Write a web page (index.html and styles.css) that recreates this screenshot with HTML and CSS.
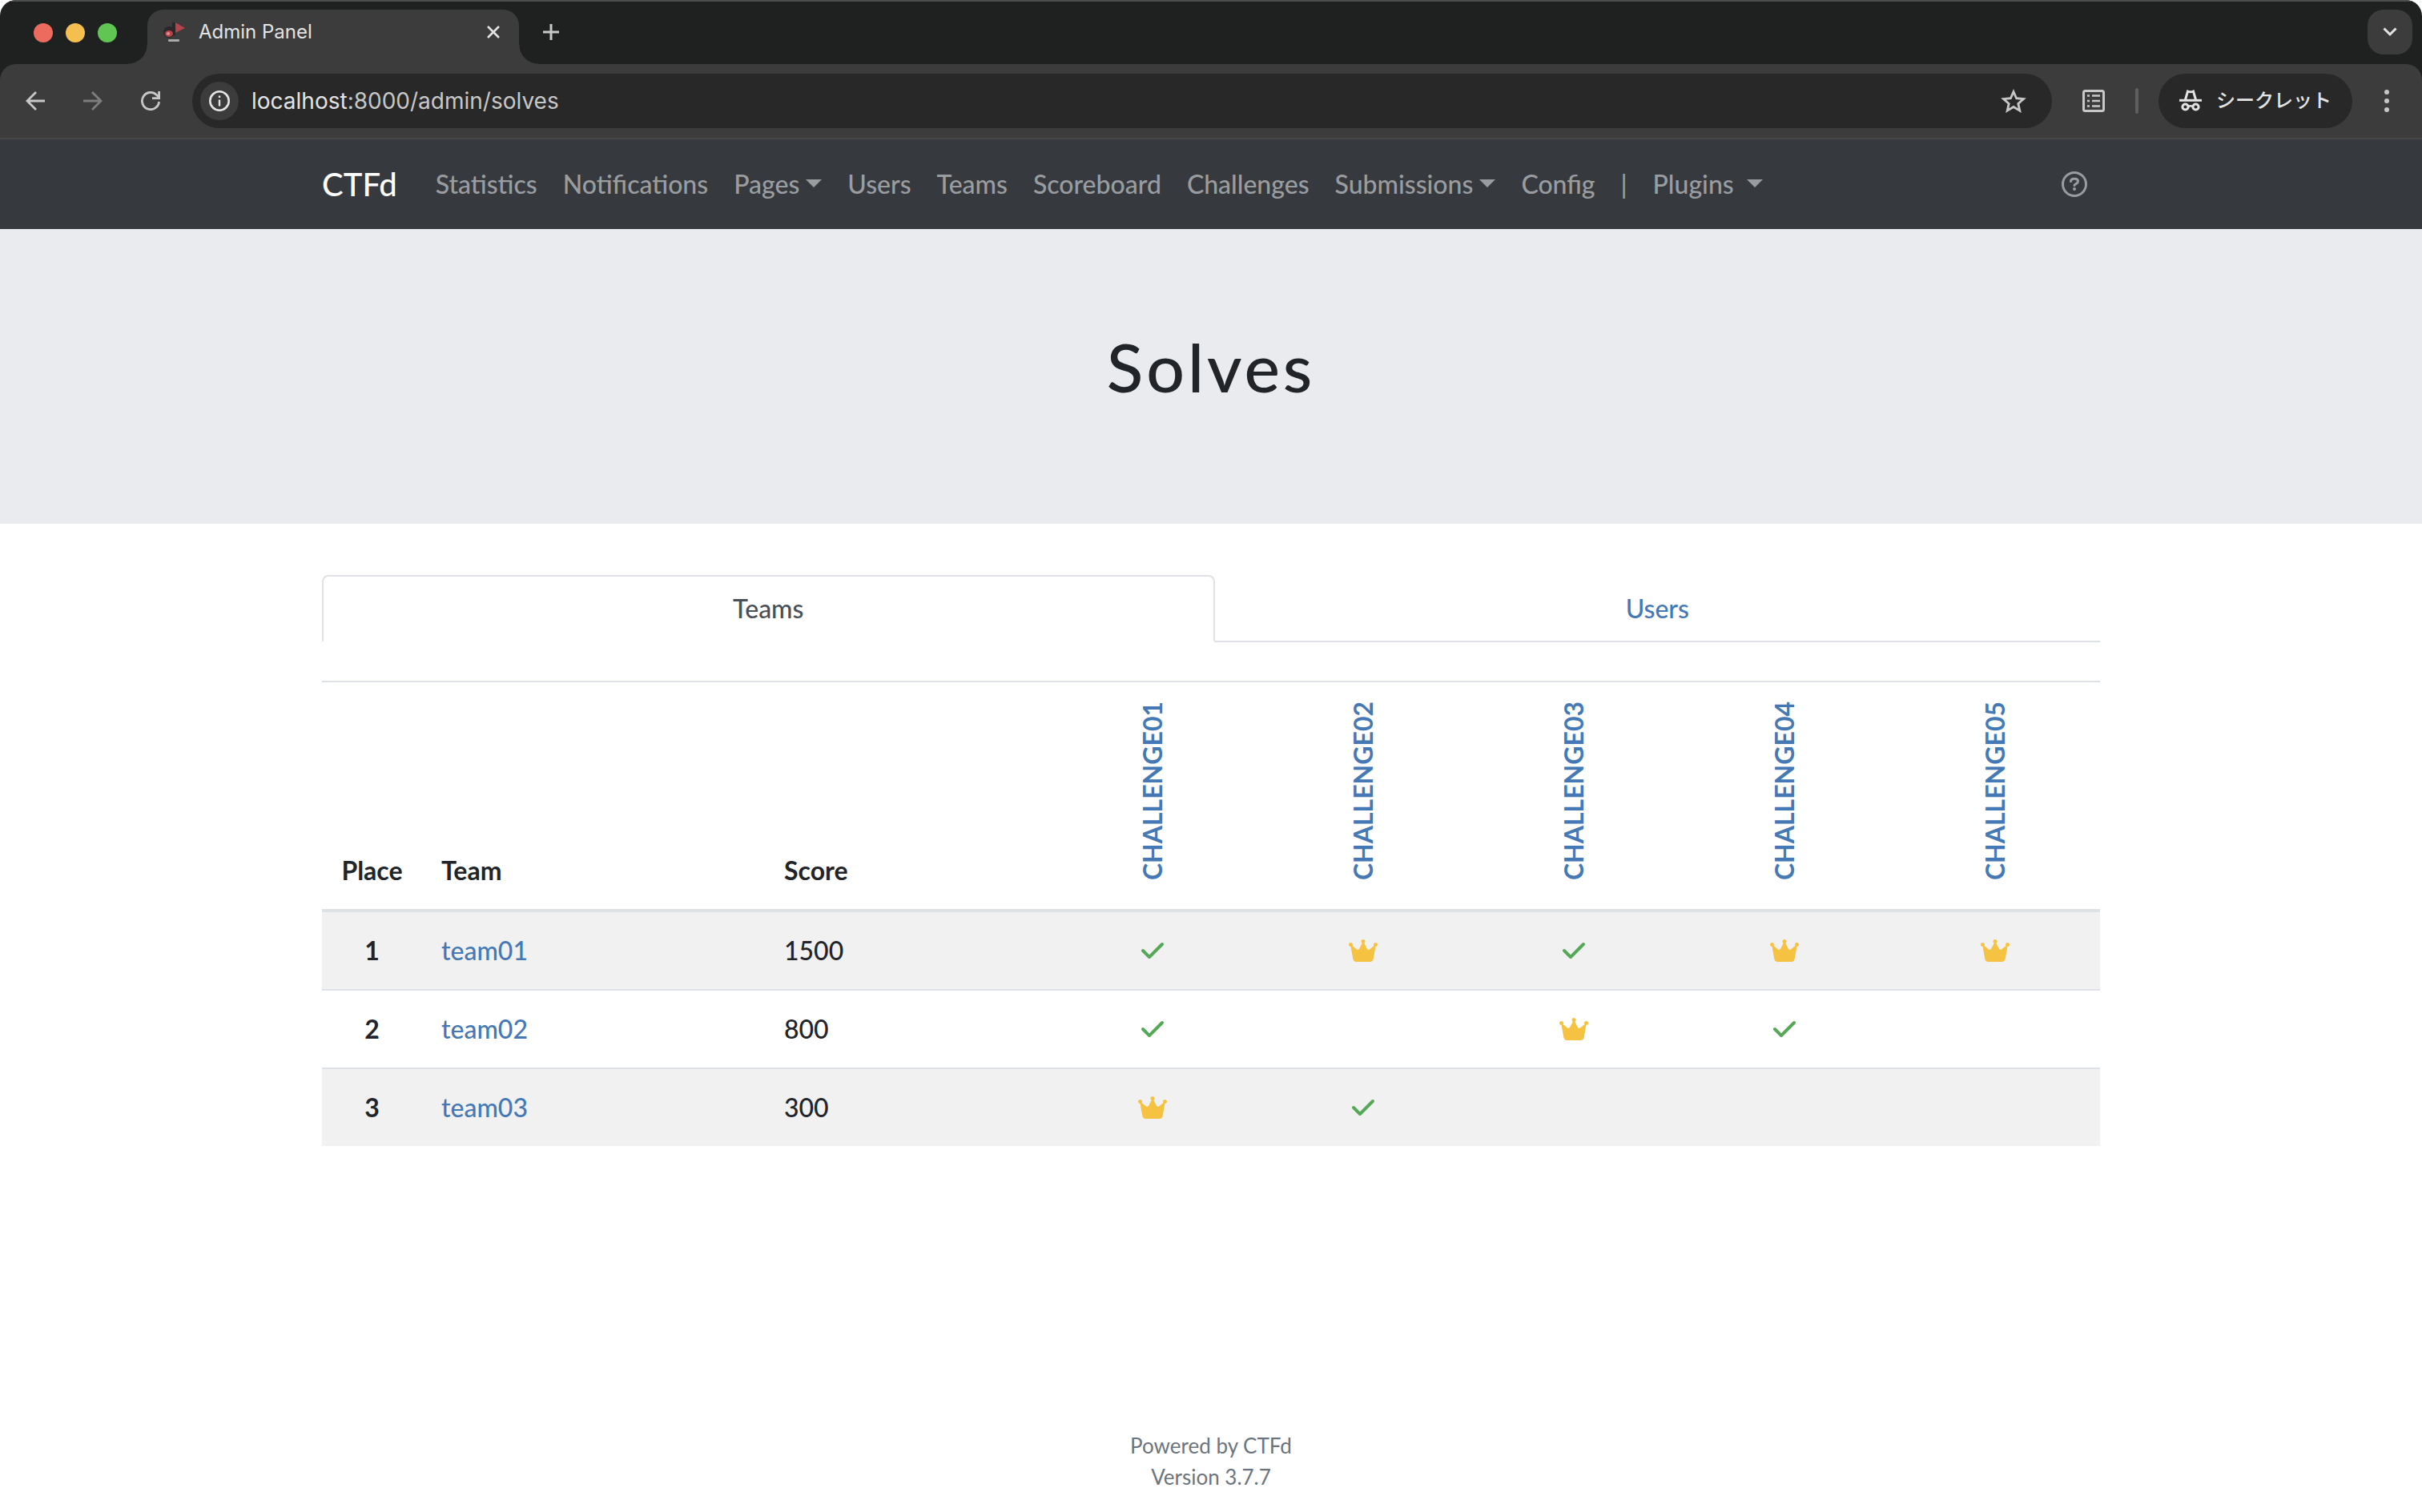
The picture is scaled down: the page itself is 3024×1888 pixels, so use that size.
FILE: index.html
```html
<!DOCTYPE html>
<html lang="en">
<head>
<meta charset="utf-8">
<title>Admin Panel</title>
<link rel="stylesheet" href="styles.css">
</head>
<body>
<svg class="sprite" aria-hidden="true">
  <symbol id="check" viewBox="0 0 512 512"><path d="M470.6 105.4c12.5 12.5 12.5 32.800 0 45.300l-256 256c-12.500 12.500-32.800 12.500-45.300 0l-128-128c-12.500-12.500-12.500-32.800 0-45.300s32.800-12.500 45.300 0L192 338.700 425.400 105.400c12.500-12.500 32.800-12.500 45.300 0z"/></symbol>
  <symbol id="crown" viewBox="0 0 576 512"><path d="M309 106c11.400-7 19-19.700 19-34c0-22.100-17.900-40-40-40s-40 17.900-40 40c0 14.400 7.600 27 19 34L209.700 220.600c-9.100 18.200-32.700 23.400-48.600 10.700L72 160c5-6.700 8-15 8-24c0-22.100-17.900-40-40-40S0 113.900 0 136s17.900 40 40 40c.2 0 .5 0 .7 0L86.400 427.400c5.500 30.400 32 52.600 63 52.600H426.600c30.900 0 57.400-22.100 63-52.600L535.300 176c.2 0 .5 0 .7 0c22.100 0 40-17.900 40-40s-17.900-40-40-40s-40 17.900-40 40c0 9 3 17.300 8 24l-89.100 71.300c-15.900 12.700-39.500 7.500-48.600-10.700L309 106z"/></symbol>
</svg>

<div class="browser">
  <div class="tabstrip">
    <div class="lights"><span class="light red"></span><span class="light yellow"></span><span class="light green"></span></div>
    <div class="tab">
      <svg class="favicon" viewBox="0 0 30 28"><circle cx="7" cy="14" r="7" fill="#2b2627"/><path d="M11 2v16h4V2z" fill="#2a2728"/><path d="M15 2l12 7-12 6z" fill="#b2444b"/><ellipse cx="7" cy="16" rx="5" ry="4" fill="#b8414b"/><circle cx="6" cy="16" r="2" fill="#dd9096"/><rect x="6" y="23" width="14" height="3" rx="1" fill="#a9a9a9"/></svg>
      <span class="tab-title">Admin Panel</span>
      <button class="icon-btn" aria-label="Close tab"><svg width="16" height="16" viewBox="0 0 16 16"><path d="M1 1l14 14M15 1L1 15" stroke="#e3e3e3" stroke-width="2.600"/></svg></button>
    </div>
    <button class="icon-btn new-tab" aria-label="New tab"><svg width="20" height="20" viewBox="0 0 20 20"><path d="M10 0v20M0 10h20" stroke="#c7c7c7" stroke-width="3"/></svg></button>
    <button class="tab-search" aria-label="Search tabs"><svg width="18" height="12" viewBox="0 0 18 12"><path d="M1.500 1.500L9 9l7.500-7.500" fill="none" stroke="#e3e3e3" stroke-width="3"/></svg></button>
  </div>
  <div class="toolbar">
    <button class="icon-btn" aria-label="Back"><svg width="24" height="24" viewBox="0 0 24 24"><path d="M24 12H2M13 1L2 12l11 11" fill="none" stroke="#c7c7c7" stroke-width="2.800"/></svg></button>
    <button class="icon-btn" aria-label="Forward"><svg width="24" height="24" viewBox="0 0 24 24"><path d="M0 12h22M11 1l11 11-11 11" fill="none" stroke="#7d7d7d" stroke-width="2.800"/></svg></button>
    <button class="icon-btn" aria-label="Reload"><svg width="24" height="24" viewBox="0 0 24 24"><path d="M22.600 13A10.600 10.600 0 1 1 19.500 4.500L22 7" fill="none" stroke="#c7c7c7" stroke-width="2.800"/><path d="M22.600 0v8.600H14" fill="none" stroke="#c7c7c7" stroke-width="2.800"/></svg></button>
    <form class="omnibox">
      <button type="button" class="site-info" aria-label="Site information"><svg width="26" height="26" viewBox="0 0 26 26"><circle cx="13" cy="13" r="11.700" fill="none" stroke="#e3e3e3" stroke-width="2.600"/><path d="M13 11.500v8M13 6.500v2.600" stroke="#e3e3e3" stroke-width="2.400"/></svg></button>
      <div class="url"><span class="host">localhost</span>:8000/admin/solves</div>
      <button type="button" class="icon-btn" aria-label="Bookmark"><svg width="32" height="30" viewBox="0 0 32 30"><path d="M16 3.500l3.600 8.200 8.900.8-6.700 5.900 2 8.700L16 22.500l-7.800 4.600 2-8.700-6.700-5.900 8.900-.8z" fill="none" stroke="#c7c7c7" stroke-width="2.800"/></svg></button>
    </form>
    <button class="icon-btn" aria-label="Reading list"><svg width="28" height="28" viewBox="0 0 28 28"><rect x="1.500" y="1.500" width="25" height="25" rx="2" fill="none" stroke="#c7c7c7" stroke-width="3"/><path d="M6 7.500h3M6 14h3M6 20.500h3M12 7.500h10M12 14h10M12 20.500h10" stroke="#c7c7c7" stroke-width="2.600"/></svg></button>
    <span class="divider"></span>
    <button class="incognito"><svg width="28" height="28" viewBox="0 0 28 28"><path d="M0 13.300h28" stroke="#e3e3e3" stroke-width="3"/><path d="M7.500 12.500L10.500 2q3.500 1.600 7 0l3 10.500" fill="none" stroke="#e3e3e3" stroke-width="3"/><circle cx="7.500" cy="21.500" r="3.600" fill="none" stroke="#e3e3e3" stroke-width="3"/><circle cx="20.500" cy="21.500" r="3.600" fill="none" stroke="#e3e3e3" stroke-width="3"/><path d="M11 21q3-1.500 6 0" fill="none" stroke="#e3e3e3" stroke-width="2.600"/></svg><span lang="ja">シークレット</span></button>
    <button class="icon-btn" aria-label="Menu"><svg width="6" height="28" viewBox="0 0 6 28"><g fill="#c7c7c7"><circle cx="3" cy="3" r="3"/><circle cx="3" cy="14" r="3"/><circle cx="3" cy="25" r="3"/></g></svg></button>
  </div>
</div>

<nav class="navbar">
  <div class="container nav-row">
    <a class="brand" href="#">CTFd</a>
    <ul class="nav-list">
      <li><a class="nav-link" href="#">Statistics</a></li>
      <li><a class="nav-link" href="#">Notifications</a></li>
      <li><a class="nav-link caret" href="#">Pages</a></li>
      <li><a class="nav-link" href="#">Users</a></li>
      <li><a class="nav-link" href="#">Teams</a></li>
      <li><a class="nav-link" href="#">Scoreboard</a></li>
      <li><a class="nav-link" href="#">Challenges</a></li>
      <li><a class="nav-link caret" href="#">Submissions</a></li>
      <li><a class="nav-link" href="#">Config</a></li>
      <li><span class="nav-link">|</span></li>
      <li><a class="nav-link caret" href="#">Plugins </a></li>
    </ul>
    <a class="nav-link help" href="#" aria-label="Help"><svg width="32" height="32" viewBox="0 0 32 32"><circle cx="16" cy="16" r="14.500" fill="none" stroke="currentColor" stroke-width="3"/><path d="M11.500 12.500c0-2.200 1.500-3.300 4-3.300h1.200c2.300 0 3.800 1.300 3.800 3.300 0 3-4.500 3-4.500 5" fill="none" stroke="currentColor" stroke-width="3" stroke-linecap="round"/><circle cx="16" cy="22" r="2" fill="currentColor"/></svg></a>
  </div>
</nav>

<header class="jumbotron"><h1>Solves</h1></header>

<main class="container">
  <ul class="tabs">
    <li><a class="tab-link active" href="#">Teams</a></li>
    <li><a class="tab-link" href="#">Users</a></li>
  </ul>
  <table class="board">
    <colgroup><col class="c-place"><col class="c-team"><col class="c-score"><col><col><col><col><col></colgroup>
    <thead>
      <tr>
        <th class="center" scope="col">Place</th><th scope="col">Team</th><th scope="col">Score</th>
        <th class="chal" scope="col"><a href="#">CHALLENGE01</a></th>
        <th class="chal" scope="col"><a href="#">CHALLENGE02</a></th>
        <th class="chal" scope="col"><a href="#">CHALLENGE03</a></th>
        <th class="chal" scope="col"><a href="#">CHALLENGE04</a></th>
        <th class="chal" scope="col"><a href="#">CHALLENGE05</a></th>
      </tr>
    </thead>
    <tbody>
      <tr><th class="center" scope="row">1</th><td><a href="#">team01</a></td><td>1500</td>
        <td class="center"><svg class="check"><use href="#check"/></svg></td><td class="center"><svg class="crown"><use href="#crown"/></svg></td><td class="center"><svg class="check"><use href="#check"/></svg></td><td class="center"><svg class="crown"><use href="#crown"/></svg></td><td class="center"><svg class="crown"><use href="#crown"/></svg></td></tr>
      <tr><th class="center" scope="row">2</th><td><a href="#">team02</a></td><td>800</td>
        <td class="center"><svg class="check"><use href="#check"/></svg></td><td></td><td class="center"><svg class="crown"><use href="#crown"/></svg></td><td class="center"><svg class="check"><use href="#check"/></svg></td><td></td></tr>
      <tr><th class="center" scope="row">3</th><td><a href="#">team03</a></td><td>300</td>
        <td class="center"><svg class="crown"><use href="#crown"/></svg></td><td class="center"><svg class="check"><use href="#check"/></svg></td><td></td><td></td><td></td></tr>
    </tbody>
  </table>
</main>

<footer class="footer">Powered by CTFd<br>Version 3.7.7</footer>
</body>
</html>
```
FILE: styles.css
```css
* { box-sizing: border-box; }
html { background: #fff; }
body {
  margin: 0;
  min-height: 100vh;
  display: flex;
  flex-direction: column;
  font: 500 32px/48px Lato, sans-serif;
  color: #212529;
}
a { color: #4479b5; text-decoration: none; }
ul { list-style: none; margin: 0; padding: 0; }
button { border: 0; padding: 0; background: none; font: inherit; color: inherit; }
svg { display: block; flex: none; }
.sprite { position: absolute; width: 0; height: 0; }

/* Browser window */
.browser {
  font-family: Inter, "Noto Sans CJK JP", sans-serif;
  font-weight: 400;
  color: #e3e3e3;
  background: #1f2120;
  border-radius: 20px 20px 0 0;
  overflow: hidden;
}
.tabstrip {
  display: flex;
  height: 80px;
  padding: 10px 12px 0 42px;
  border-top: 2px solid #4c4e4d;
}
.lights { display: flex; gap: 16px; padding-top: 17px; margin-right: 38px; }
.light { width: 24px; height: 24px; border-radius: 50%; }
.red { background: #ed6a5e; }
.yellow { background: #f5bf4f; }
.green { background: #61c554; }
.tab {
  position: relative;
  display: flex;
  align-items: center;
  width: 464px;
  padding: 0 24px 12px 20px;
  background: #3c3c3c;
  border-radius: 20px 20px 0 0;
}
.tab::before, .tab::after {
  content: "";
  position: absolute;
  bottom: 0;
  width: 24px;
  height: 24px;
}
.tab::before { left: -24px; background: radial-gradient(circle at 0 0, transparent 23px, #3c3c3c 24px); }
.tab::after { right: -24px; background: radial-gradient(circle at 100% 0, transparent 23px, #3c3c3c 24px); }
.favicon { width: 30px; height: 28px; }
.tab-title { flex: 1; margin-left: 14px; font-size: 24px; line-height: 32px; }
.new-tab { height: 56px; margin-left: 30px; }
.tab-search {
  display: flex;
  align-items: center;
  justify-content: center;
  width: 56px;
  height: 56px;
  margin-left: auto;
  border-radius: 20px;
  background: #3c3c3c;
}
.toolbar {
  display: flex;
  align-items: center;
  height: 94px;
  padding: 0 41px 0 32px;
  border-bottom: 2px solid #474747;
  border-radius: 20px 20px 0 0;
  background: #3c3c3c;
}
.toolbar > .icon-btn + .icon-btn { margin-left: 48px; }
.omnibox {
  flex: 1;
  display: flex;
  align-items: center;
  height: 68px;
  margin: 0 38px 0 40px;
  padding: 0 32px 0 10px;
  border-radius: 34px;
  background: #282828;
}
.site-info {
  display: flex;
  align-items: center;
  justify-content: center;
  width: 48px;
  height: 48px;
  border-radius: 50%;
  background: #3c3c3c;
}
.url { flex: 1; margin-left: 16px; font-size: 28px; line-height: 40px; color: #c7c7c7; }
.host { color: #e3e3e3; }
.divider { width: 4px; height: 32px; margin: 0 25px 0 38px; border-radius: 2px; background: #5e5e5e; }
.incognito {
  display: flex;
  align-items: center;
  gap: 18px;
  height: 68px;
  margin-right: 40px;
  padding: 0 26px;
  border-radius: 34px;
  background: #282828;
  font-size: 24px;
  font-weight: 500;
  line-height: 32px;
}

/* Site navigation */
.container { width: 100%; max-width: 2280px; margin: 0 auto; padding: 0 30px; }
.navbar { padding: 16px 0; background: #363a3e; }
.nav-row, .nav-list { display: flex; align-items: center; }
.brand { margin-right: 32px; padding: 10px 0; font-size: 40px; line-height: 60px; color: #fff; }
.nav-link { display: block; padding: 16px; color: #9a9da0; white-space: pre; }
.caret::after {
  content: "";
  display: inline-block;
  margin-left: 8px;
  vertical-align: 8px;
  border: 10px solid transparent;
  border-top-color: currentColor;
  border-bottom: 0;
}
.help { margin-left: auto; }

.jumbotron { padding: 124px 64px 148px; background: #eaebef; text-align: center; }
h1 { margin: 0; font-size: 84px; font-weight: 500; line-height: 96px; letter-spacing: 4px; }

/* Teams / Users tabs */
main.container { padding-top: 64px; }
.tabs { display: flex; border-bottom: 2px solid #dee2e6; }
.tabs li { flex: 1 1 auto; margin-bottom: -2px; }
.tab-link {
  display: block;
  padding: 16px 32px;
  border: 2px solid transparent;
  border-radius: 8px 8px 0 0;
  text-align: center;
}
.tab-link.active { color: #495057; background: #fff; border-color: #dee2e6 #dee2e6 #fff; }

/* Scoreboard */
.board { width: 100%; margin-top: 48px; table-layout: fixed; border-collapse: separate; border-spacing: 0; }
.c-place { width: 125px; }
.c-team { width: 428px; }
.c-score { width: 353px; }
.board th, .board td { padding: 24px; border-top: 2px solid #dee2e6; text-align: left; vertical-align: middle; }
.board .center { text-align: center; }
.board thead th { vertical-align: bottom; border-bottom: 4px solid #dee2e6; }
.board thead .chal { padding-bottom: 36px; }
.board tbody tr:first-child > * { border-top: 0; }
.board tbody tr:nth-child(odd) > * { background: #f1f1f1; }
.board thead .chal a { display: block; margin: 0 auto; writing-mode: vertical-rl; transform: rotate(180deg); }
.check, .crown { height: 32px; margin: 0 auto; }
.check { width: 32px; fill: #54a857; }
.crown { width: 36px; fill: #f5c242; }

.footer { margin-top: auto; padding-bottom: 24px; text-align: center; font-size: 26px; font-weight: 400; line-height: 39px; color: #6c757d; }
```
